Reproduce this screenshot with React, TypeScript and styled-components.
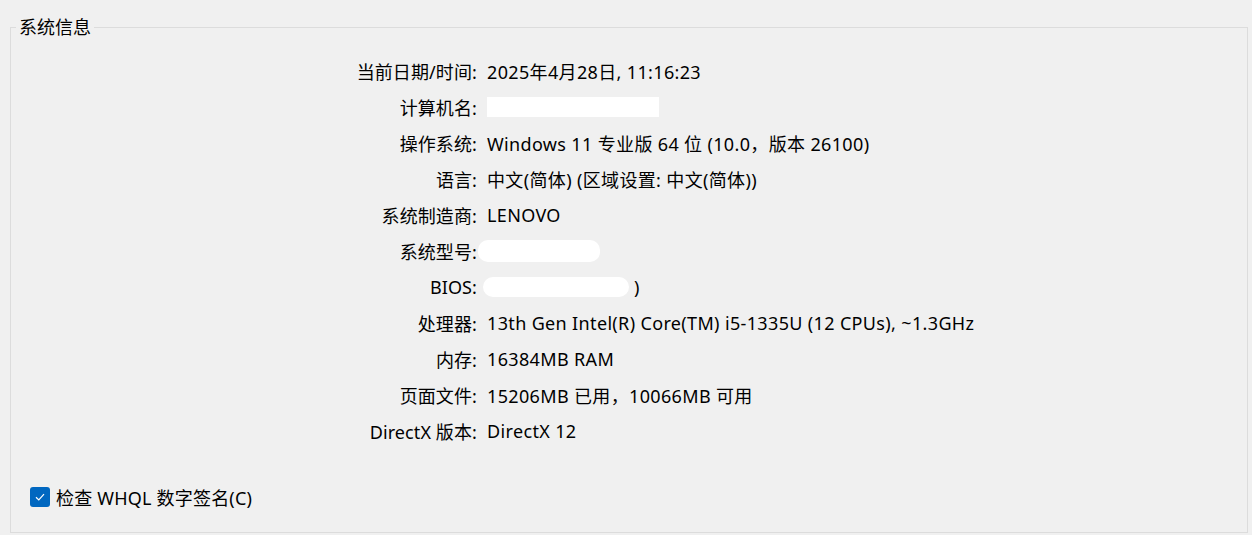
import * as React from 'react';
import styled, { createGlobalStyle } from 'styled-components';

const Global = createGlobalStyle`
  html, body {
    margin: 0;
    padding: 0;
    background: #f0f0f0;
  }
  body {
    font-family: 'Noto Sans', 'Noto Sans CJK SC', sans-serif;
    color: #000;
  }
`;

const Page = styled.div`
  width: 1252px;
  height: 535px;
  padding: 18px 5px 0 10px;
  box-sizing: border-box;
`;

const Group = styled.fieldset`
  margin: 0;
  width: 1238px;
  height: 515px;
  box-sizing: border-box;
  border: 1px solid #dcdcdc;
  padding: 0;
  display: flex;
  flex-direction: column;
`;

const Legend = styled.legend`
  margin-left: 5px;
  padding: 0 3px 0 3px;
  font-size: 18px;
  line-height: 19px;
`;

const InfoGrid = styled.div`
  display: grid;
  grid-template-columns: 466px auto;
  column-gap: 10px;
  margin-top: 16px;
  grid-auto-rows: 36px;
  align-items: center;
  font-size: 18px;
`;

const Label = styled.div`
  text-align: right;
  white-space: nowrap;
  letter-spacing: 0.1px;
`;

const Value = styled.div`
  white-space: nowrap;
  display: flex;
  align-items: center;
  letter-spacing: 0.35px;
`;

const Redacted = styled.span<{ $w: number; $h: number; $round?: boolean }>`
  display: inline-block;
  width: ${(p) => p.$w}px;
  height: ${(p) => p.$h}px;
  background: #fff;
  border-radius: ${(p) => (p.$round ? '10px' : '0')};
`;

const Footer = styled.label`
  margin-top: auto;
  margin-bottom: 22px;
  margin-left: 19px;
  display: flex;
  align-items: center;
  gap: 6px;
  font-size: 18px;
  letter-spacing: 0.2px;
`;

const Box = styled.span`
  width: 20px;
  height: 20px;
  border-radius: 3px;
  background: #0067c0;
  display: flex;
  align-items: center;
  justify-content: center;
`;

const rows: [string, React.ReactNode][] = [
  ['当前日期/时间:', '2025年4月28日, 11:16:23'],
  ['计算机名:', <Redacted $w={172} $h={20} />],
  ['操作系统:', 'Windows 11 专业版 64 位 (10.0，版本 26100)'],
  ['语言:', '中文(简体) (区域设置: 中文(简体))'],
  ['系统制造商:', 'LENOVO'],
  ['系统型号:', <Redacted $w={122} $h={22} $round style={{ marginLeft: -9 }} />],
  [
    'BIOS:',
    <>
      <Redacted $w={146} $h={20} $round style={{ marginLeft: -4 }} />
      <span>&nbsp;)</span>
    </>,
  ],
  ['处理器:', '13th Gen Intel(R) Core(TM) i5-1335U (12 CPUs), ~1.3GHz'],
  ['内存:', '16384MB RAM'],
  ['页面文件:', '15206MB 已用，10066MB 可用'],
  ['DirectX 版本:', 'DirectX 12'],
];

export default function App() {
  return (
    <Page>
      <Global />
      <Group>
        <Legend>系统信息</Legend>
        <InfoGrid>
          {rows.map(([k, v]) => (
            <React.Fragment key={k}>
              <Label>{k}</Label>
              <Value>{v}</Value>
            </React.Fragment>
          ))}
        </InfoGrid>
        <Footer>
          <Box>
            <svg width="12" height="12" viewBox="0 0 12 12">
              <path d="M2 6.3 L4.8 9 L10 3.2" fill="none" stroke="#fff" strokeWidth="1.2" />
            </svg>
          </Box>
          检查 WHQL 数字签名(C)
        </Footer>
      </Group>
    </Page>
  );
}
